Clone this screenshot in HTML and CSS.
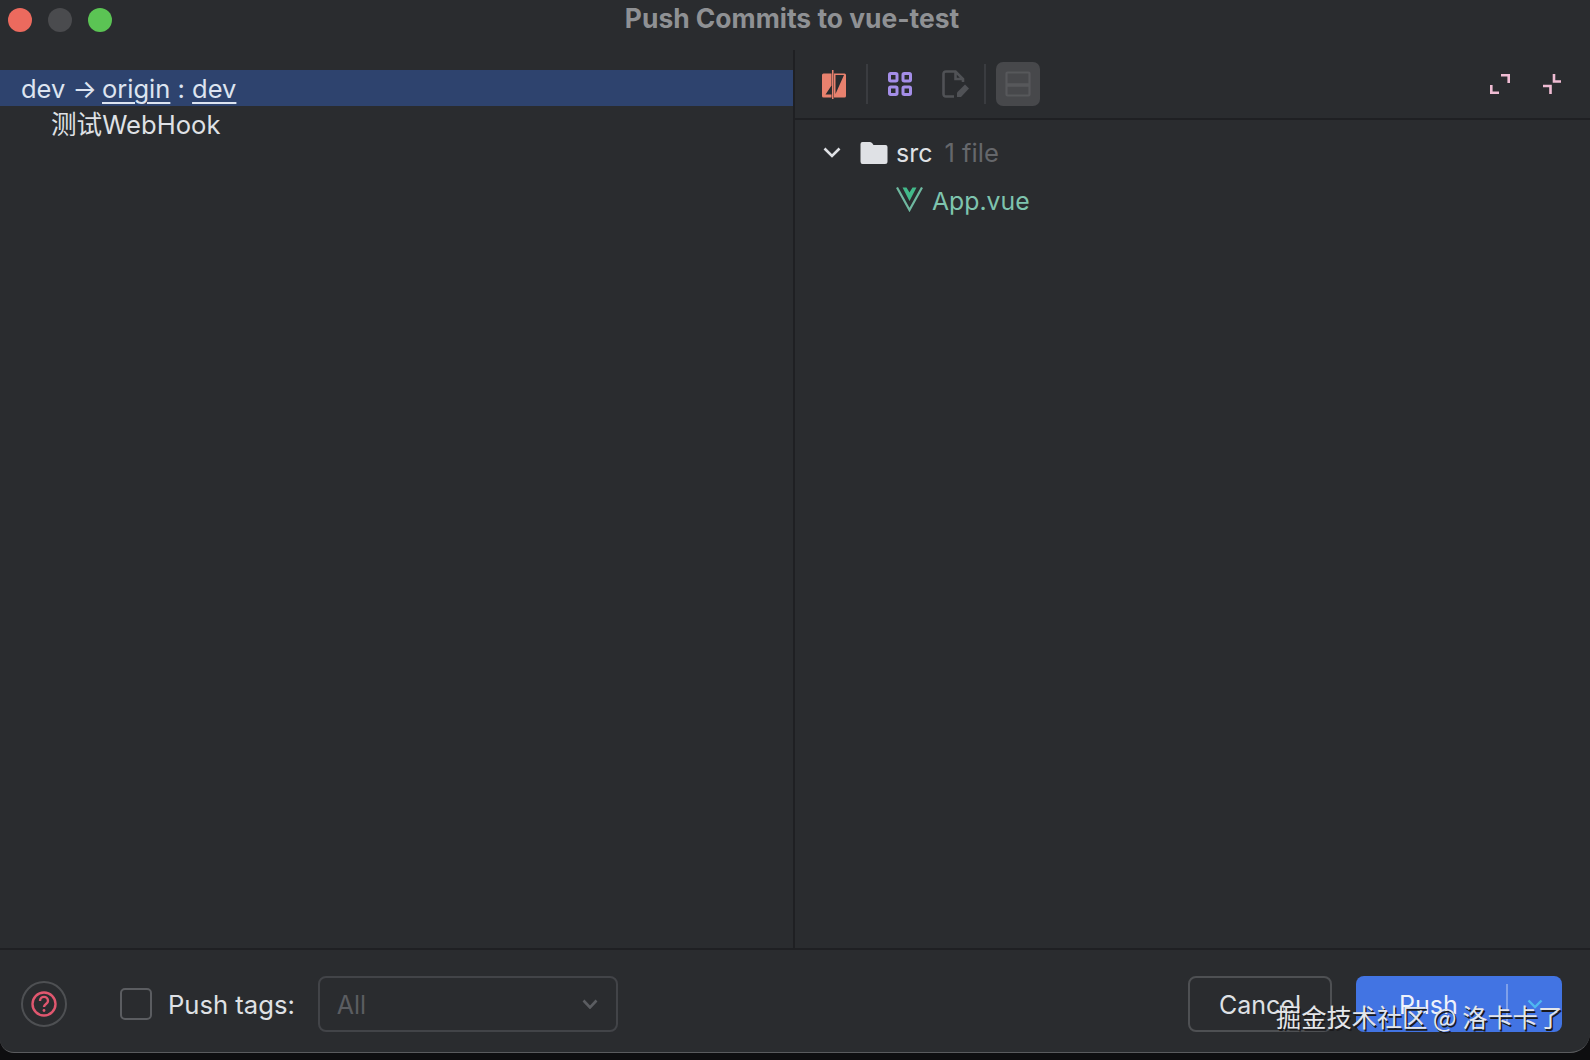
FILE: index.html
```html
<!DOCTYPE html>
<html lang="zh">
<head>
<meta charset="utf-8">
<title>Push Commits to vue-test</title>
<link rel="stylesheet" href="styles.css">
</head>
<body>
<div class="window">
  <header class="titlebar">
    <div class="lights">
      <span class="light red"></span>
      <span class="light gray"></span>
      <span class="light green"></span>
    </div>
    <div class="title">Push Commits to vue-test</div>
  </header>
  <main class="panes">
    <section class="left">
      <div class="row selected">dev <span class="arrow">→</span> <u>origin</u> : <u>dev</u></div>
      <div class="row commit">测试WebHook</div>
    </section>
    <section class="right">
      <div class="toolbar">
        <svg class="tool" width="24" height="29" viewBox="0 0 24 29">
          <path fill-rule="evenodd" d="M1.500 3.500 H9.500 V27.500 H1.500 Q0 27.500 0 26 V5 Q0 3.500 1.500 3.500 Z M3.500 24.500 H9.500 V15.500 Z" fill="#e8816e"/>
          <rect x="10" y="0" width="1.500" height="29" fill="#e8816e"/>
          <path fill-rule="evenodd" d="M12 3.500 H22.500 Q24 3.500 24 5 V26 Q24 27.500 22.500 27.500 H12 Z M13.500 5 V24 L22 5 Z" fill="#e8816e"/>
        </svg>
        <span class="sep first"></span>
        <svg class="tool grid" width="24" height="24" viewBox="0 0 24 24" fill="none" stroke="#a48ee8" stroke-width="3">
          <rect x="1.500" y="1.500" width="7.500" height="7.500" rx="1.200"/>
          <rect x="15" y="1.500" width="7.500" height="7.500" rx="1.200"/>
          <rect x="1.500" y="15" width="7.500" height="7.500" rx="1.200"/>
          <rect x="15" y="15" width="7.500" height="7.500" rx="1.200"/>
        </svg>
        <svg class="tool file" width="28" height="28" viewBox="0 0 28 28" fill="none" stroke="#505256" stroke-width="2.600">
          <path d="M12 26.500 H4 Q1.500 26.500 1.500 24 V4 Q1.500 1.500 4 1.500 H13.500 L21 9 V12 M13.500 1.500 V9 H21"/>
          <path d="M15 27 V22.500 L23 14.500 L27 18.500 L19 27 Z" fill="#505256" stroke="none"/>
        </svg>
        <span class="sep last"></span>
        <span class="toggle">
          <svg width="26" height="26" viewBox="0 0 26 26" fill="none" stroke="#57585b" stroke-width="2.200">
            <rect x="1.500" y="1.500" width="23" height="23" rx="1"/>
            <path d="M1.500 14 H24.500" stroke-width="3.500"/>
          </svg>
        </span>
        <span class="spacer"></span>
        <svg class="expand" width="20" height="20" viewBox="0 0 20 20" fill="none" stroke="#efbcd3" stroke-width="2.600">
          <path d="M11 1.300 H18.700 V9"/>
          <path d="M1.300 11 V18.700 H9"/>
        </svg>
        <svg class="collapse" width="18" height="20" viewBox="0 0 18 20" fill="none" stroke="#efbcd3" stroke-width="2.600">
          <path d="M11 0 V7.500 H18"/>
          <path d="M0 12 H7.500 V20"/>
        </svg>
      </div>
      <div class="tree">
        <div class="node folder-node">
          <svg class="chevron" width="18" height="11" viewBox="0 0 18 11" fill="none" stroke="#dfe1e5" stroke-width="2.600">
            <path d="M1.500 1.500 L9 9 L16.500 1.500"/>
          </svg>
          <svg class="folder" width="28" height="22" viewBox="0 0 28 22">
            <path d="M2.500 0 H10 Q11.500 0 12.500 1.500 L13.500 3 H25.500 Q27.500 3 27.500 5 V19.500 Q27.500 22 25 22 H2.500 Q0.500 22 0.500 19.500 V2 Q0.500 0 2.500 0 Z" fill="#dfe1e5"/>
          </svg>
          <span class="name">src</span>
          <span class="count">1 file</span>
        </div>
        <div class="node file-node">
          <svg class="vue" width="27" height="25" viewBox="0 0 27 25" fill="none">
            <path d="M1 0.500 L13.500 23 L26 0.500" stroke="#6fb8a0" stroke-width="2.200"/>
            <path d="M6.500 0.500 H10.500 L13.500 5.500 L16.500 0.500 H20.500 L13.500 14 Z" fill="#42b98a"/>
          </svg>
          <span class="vuename">App.vue</span>
        </div>
      </div>
    </section>
  </main>
  <footer class="footer">
    <span class="help">
      <svg width="28" height="28" viewBox="0 0 28 28" fill="none" stroke="#e0576f" stroke-width="2.400">
        <circle cx="14" cy="14" r="11.500"/>
        <path d="M10 11 C10 5.500 18 5.500 18 11 C18 14 14 14 14 17"/>
        <circle cx="14" cy="20.500" r="1.400" fill="#e0576f" stroke="none"/>
      </svg>
    </span>
    <span class="checkbox"></span>
    <span class="label">Push tags:</span>
    <div class="select">
      <span class="select-value">All</span>
      <svg width="16" height="10" viewBox="0 0 16 10" fill="none" stroke="#5b5d61" stroke-width="2.600">
        <path d="M1.500 1.500 L8 8.500 L14.500 1.500"/>
      </svg>
    </div>
    <span class="spacer"></span>
    <button class="btn cancel">Cancel</button>
    <div class="btn push">
      <span class="push-label">Push</span>
      <span class="push-sep"></span>
      <svg class="push-caret" width="16" height="10" viewBox="0 0 16 10" fill="none" stroke="#4fb8f0" stroke-width="2.400">
        <path d="M1.500 1.500 L8 8 L14.500 1.500"/>
      </svg>
    </div>
  </footer>
  <div class="watermark">掘金技术社区 @ 洛卡卡了</div>
</div>
</body>
</html>
```
FILE: styles.css
```css
* { box-sizing: border-box; }
html, body { margin: 0; padding: 0; height: 100%; background: #0e0e10; }
body { width: 1590px; height: 1060px; overflow: hidden; font-family: Inter, "Noto Sans CJK SC", sans-serif; }
.window {
  position: relative;
  width: 1590px;
  height: 1053px;
  display: flex;
  flex-direction: column;
  background: #2a2c2f;
  border-radius: 0 0 20px 14px;
  border-bottom: 1px solid #5a5b5e;
  overflow: hidden;
}
.titlebar { position: relative; height: 50px; flex: none; display: flex; align-items: flex-start; }
.lights { display: flex; gap: 16px; padding: 8px 0 0 8px; }
.light { width: 24px; height: 24px; border-radius: 50%; }
.red { background: #ec6a5e; }
.gray { background: #4a4b4e; }
.green { background: #5bc454; }
.title {
  position: absolute; left: 0; right: 6px; top: 2px; text-align: center;
  color: #8f9194; font-size: 26.4px; font-weight: 700; line-height: 32px;
}
.panes { flex: 1; display: flex; min-height: 0; border-bottom: 2px solid #1f2023; }
.left { width: 795px; flex: none; padding-top: 20px; border-right: 2px solid #1f2023; }
.row { height: 36px; line-height: 38px; font-size: 25.6px; color: #dfe1e5; white-space: nowrap; }
.selected { background: #2e436e; padding-left: 21px; color: #dde4f0; font-size: 25.5px; }
.selected u { text-underline-offset: 4px; text-decoration-thickness: 2px; }
.arrow { margin-right: -2px; }
.commit { padding-left: 51px; }
.right { flex: 1; min-width: 0; display: flex; flex-direction: column; }
.toolbar {
  height: 70px; flex: none; display: flex; align-items: center;
  padding: 0 29px 0 27px; border-bottom: 2px solid #1f2023;
}
.tool { flex: none; }
.sep { width: 2px; height: 40px; background: #3a3c40; flex: none; }
.sep.first { margin: 0 20px 0 20px; }
.file { margin-left: 30px; }
.sep.last { margin: 0 10px 0 14px; }
.toggle {
  width: 44px; height: 44px; border-radius: 7px; background: #47484b; flex: none;
  display: flex; align-items: center; justify-content: center;
}
.spacer { flex: 1; }
.collapse { margin-left: 33px; }
.tree { padding: 8px 0 0 28px; }
.node { display: flex; align-items: center; height: 48px; font-size: 25px; }
.folder-node { height: 49px; }
.chevron { flex: none; }
.folder { margin-left: 19px; flex: none; }
.name { color: #dfe1e5; margin-left: 8px; }
.count { color: #65676b; margin-left: 12px; font-size: 25.6px; }
.file-node { padding-left: 73px; }
.vue { flex: none; margin-top: -4px; }
.vuename { color: #7ec4ae; margin-left: 9px; font-size: 24.8px; }
.footer {
  height: 102px; flex: none; display: flex; align-items: center; padding: 6px 28px 0 21px;
}
.help {
  width: 46px; height: 46px; border-radius: 50%; border: 2px solid #4e5053;
  display: flex; align-items: center; justify-content: center; flex: none;
}
.checkbox {
  width: 32px; height: 32px; margin-left: 53px; border: 2px solid #5b5d61; border-radius: 5px; flex: none;
}
.label { margin-left: 16px; color: #dfe1e5; font-size: 25.6px; white-space: nowrap; }
.select {
  width: 300px; height: 56px; margin-left: 23px; padding: 0 18px 0 17px;
  border: 2px solid #424448; border-radius: 8px; flex: none;
  display: flex; align-items: center; justify-content: space-between;
  color: #5b5d61; font-size: 25px;
}
.select-value { padding-top: 2px; }
.btn {
  height: 56px; border-radius: 8px; font-family: inherit; font-size: 25px; flex: none;
  display: flex; align-items: center; justify-content: center;
}
.cancel {
  width: 144px; background: transparent; border: 2px solid #4e5053; color: #dfe1e5; padding: 2px 0 0;
}
.push {
  width: 206px; margin-left: 24px; background: #4274e3; color: #eef2fb; position: relative;
  justify-content: flex-start;
}
.push-label { margin-left: 43px; padding-top: 2px; }
.push-sep { width: 2px; height: 40px; background: #7fa0ea; margin-left: 48px; }
.push-caret { margin-left: 19px; }
.watermark {
  position: absolute; left: 1276px; top: 1000px; white-space: nowrap;
  color: #e4e6ea; font-size: 25.2px; line-height: 32px;
  font-family: "Noto Sans CJK SC", sans-serif;
  text-shadow: 1.500px 1.500px 0 #1a1a1c;
}
```
